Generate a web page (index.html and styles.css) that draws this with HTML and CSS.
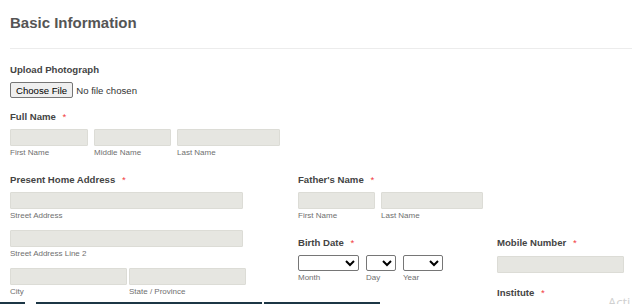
FILE: index.html
```html
<!DOCTYPE html>
<html lang="en">
<head>
    <meta charset="UTF-8">
    <meta name="viewport" content="width=device-width, initial-scale=1.0">
    <title>Basic Information</title>
    <link rel="stylesheet" href="styles.css">
</head>
<body>
    <div class="page">
        <form class="form">
            <h2 class="section-title">Basic Information</h2>
            <hr class="divider">

            <div class="field upload">
                <label class="label">Upload Photograph</label>
                <input type="file" class="file-input">
            </div>

            <div class="field">
                <label class="label">Full Name <span class="req">*</span></label>
                <div class="row">
                    <div class="part">
                        <input type="text" class="text w-78">
                        <span class="sub">First Name</span>
                    </div>
                    <div class="part">
                        <input type="text" class="text w-77">
                        <span class="sub">Middle Name</span>
                    </div>
                    <div class="part">
                        <input type="text" class="text w-103">
                        <span class="sub">Last Name</span>
                    </div>
                </div>
            </div>

            <div class="columns">
                <div class="field address">
                    <label class="label">Present Home Address <span class="req">*</span></label>
                    <div class="stack">
                        <div class="part">
                            <input type="text" class="text w-233">
                            <span class="sub">Street Address</span>
                        </div>
                        <div class="part">
                            <input type="text" class="text w-233">
                            <span class="sub">Street Address Line 2</span>
                        </div>
                        <div class="row tight">
                            <div class="part">
                                <input type="text" class="text w-117">
                                <span class="sub">City</span>
                            </div>
                            <div class="part">
                                <input type="text" class="text w-117">
                                <span class="sub">State / Province</span>
                            </div>
                        </div>
                    </div>
                </div>

                <div class="field father">
                    <label class="label">Father's Name <span class="req">*</span></label>
                    <div class="row">
                        <div class="part">
                            <input type="text" class="text w-77">
                            <span class="sub">First Name</span>
                        </div>
                        <div class="part">
                            <input type="text" class="text w-102">
                            <span class="sub">Last Name</span>
                        </div>
                    </div>
                </div>

                <div class="field birth">
                    <label class="label">Birth Date <span class="req">*</span></label>
                    <div class="row dates">
                        <div class="part">
                            <select class="select w-61"><option></option></select>
                            <span class="sub">Month</span>
                        </div>
                        <div class="part">
                            <select class="select w-30"><option></option></select>
                            <span class="sub">Day</span>
                        </div>
                        <div class="part">
                            <select class="select w-40"><option></option></select>
                            <span class="sub">Year</span>
                        </div>
                    </div>
                </div>

                <div class="field mobile">
                    <label class="label">Mobile Number <span class="req">*</span></label>
                    <input type="text" class="text w-127">
                </div>

                <div class="field institute">
                    <label class="label">Institute <span class="req">*</span></label>
                    <input type="text" class="text w-127">
                </div>
            </div>
        </form>

        <div class="taskbar">
            <span class="seg s1"></span>
            <span class="seg s2"></span>
            <span class="seg s3"></span>
        </div>
        <div class="watermark">Acti</div>
    </div>
</body>
</html>
```

FILE: styles.css
```css
:root {
    --label: #444444;
    --title: #555555;
    --sub: #6f6f6f;
    --input-bg: #e6e6e1;
    --input-border: #dcdcd6;
    --req: #f23a3c;
}

body {
    margin: 0;
    padding: 0;
    background: #ffffff;
    font-family: "Liberation Sans", Arial, sans-serif;
}

.page {
    position: relative;
    height: 304px;
    overflow: hidden;
}

.form {
    padding: 14px 0 0 10px;
}

.section-title {
    margin: 0;
    font-size: 15px;
    line-height: 18px;
    font-weight: bold;
    color: var(--title);
}

.divider {
    border: 0;
    border-top: 1px solid #ececec;
    margin: 16px 0 14px 0;
}

.field {
    margin-bottom: 15px;
}

.field.upload {
    margin-bottom: 12px;
}

.label {
    display: block;
    font-size: 9.6px;
    line-height: 14px;
    font-weight: bold;
    color: var(--label);
    margin-bottom: 5px;
}

.req {
    color: var(--req);
    font-weight: normal;
    margin-left: 4px;
}

.file-input {
    display: block;
    font-family: "Liberation Sans", Arial, sans-serif;
    font-size: 9.6px;
    line-height: 16px;
    color: #333;
    height: 16px;
    margin: 0;
}

.file-input::file-selector-button {
    font-family: "Liberation Sans", Arial, sans-serif;
    font-size: 9.6px;
    height: 16px;
    padding: 0 5px;
    margin-right: 3px;
    border: 1px solid #767676;
    border-radius: 2px;
    background: #efefef;
    color: #000;
}

.row {
    display: flex;
    gap: 6px;
}

.row.tight {
    gap: 2px;
}

.row.dates {
    gap: 7px;
}

.stack {
    display: flex;
    flex-direction: column;
    gap: 9px;
}

.part {
    display: flex;
    flex-direction: column;
}

.text {
    box-sizing: border-box;
    height: 17px;
    margin: 0;
    padding: 0 4px;
    border: 1px solid var(--input-border);
    background: var(--input-bg);
    border-radius: 1px;
}

.select {
    box-sizing: border-box;
    height: 16px;
    margin: 0;
    font-size: 9px;
    background: #fff;
    border: 1px solid #767676;
    border-radius: 2px;
}

.sub {
    font-size: 8px;
    line-height: 11px;
    color: var(--sub);
    padding-top: 1px;
}

.w-30 { width: 30px; }
.w-40 { width: 40px; }
.w-61 { width: 61px; }
.w-77 { width: 77px; }
.w-78 { width: 78px; }
.w-102 { width: 102px; }
.w-103 { width: 103px; }
.w-117 { width: 117px; }
.w-127 { width: 127px; }
.w-233 { width: 233px; }

.columns {
    display: grid;
    grid-template-columns: 288px 199px 1fr;
    align-items: start;
}

.address { grid-column: 1; grid-row: 1 / span 3; }
.father { grid-column: 2; grid-row: 1; }
.birth { grid-column: 2; grid-row: 2 / span 2; }
.mobile { grid-column: 3; grid-row: 2; margin-bottom: 13px; }
.institute { grid-column: 3; grid-row: 3; }

.taskbar {
    position: absolute;
    left: 0;
    bottom: 0;
    width: 100%;
    height: 2px;
    display: flex;
}

.seg {
    height: 2px;
    background: #1c3645;
}

.s1 { width: 25px; margin-right: 11px; }
.s2 { width: 226px; margin-right: 2px; }
.s3 { width: 116px; }

.watermark {
    position: absolute;
    left: 608px;
    top: 295px;
    font-family: "Open Sans", "Noto Sans", sans-serif;
    font-size: 13px;
    line-height: 14px;
    color: #d0d0d0;
    white-space: nowrap;
}
```
